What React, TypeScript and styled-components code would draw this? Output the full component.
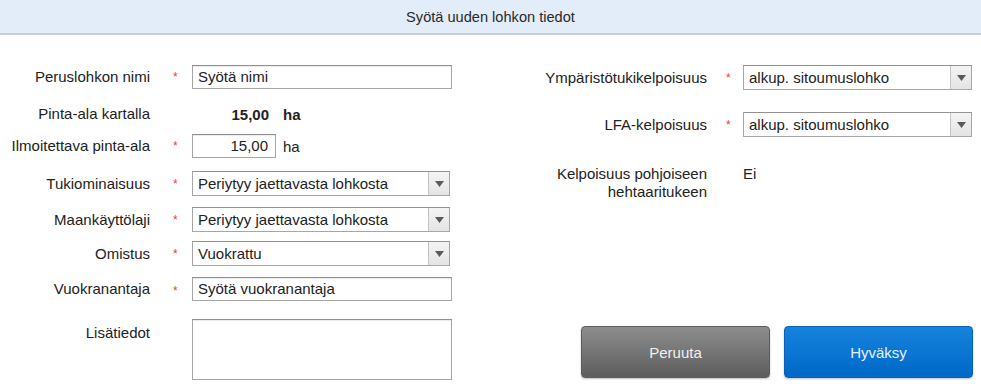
import React from 'react';
import styled, { createGlobalStyle } from 'styled-components';

const GlobalStyle = createGlobalStyle`
  html, body {
    margin: 0;
    padding: 0;
    background: #ffffff;
  }
  body {
    font-family: "Liberation Sans", Arial, Helvetica, sans-serif;
    font-size: 15px;
    color: #222222;
  }
`;

const Page = styled.div`
  width: 981px;
  height: 388px;
  overflow: hidden;
  background: #ffffff;
`;

const Header = styled.header`
  height: 33px;
  display: flex;
  align-items: center;
  justify-content: center;
  background: #e3edf9;
  border-bottom: 2px solid #c8cfd6;
  font-size: 14.6px;
  color: #2a2a2a;
`;

const Body = styled.div`
  display: grid;
  grid-template-columns: 490px 1fr;
  padding-top: 30px;
`;

const Column = styled.div`
  display: flex;
  flex-direction: column;
`;

const Row = styled.div<{ $cols: string; $mt?: number; $top?: boolean }>`
  display: grid;
  grid-template-columns: ${({ $cols }) => $cols};
  align-items: ${({ $top }) => ($top ? 'start' : 'center')};
  min-height: 24px;
  margin-top: ${({ $mt }) => $mt ?? 0}px;
`;

const Label = styled.div<{ $padTop?: number }>`
  justify-self: end;
  white-space: nowrap;
  text-align: right;
  line-height: 18px;
  padding-top: ${({ $padTop }) => $padTop ?? 0}px;
  color: #222222;
`;

const Star = styled.span<{ $pad: number; $down?: number }>`
  padding-left: ${({ $pad }) => $pad}px;
  color: #e2463c;
  font-size: 12px;
  line-height: 12px;
  position: relative;
  top: ${({ $down }) => $down ?? 0}px;
`;

const TextInput = styled.input<{ $width: number; $right?: boolean }>`
  box-sizing: border-box;
  width: ${({ $width }) => $width}px;
  height: 24px;
  margin: 0;
  padding: 0 7px 1px 5px;
  border: 1px solid #a6a6a6;
  border-top-color: #8f8f8f;
  border-radius: 0;
  box-shadow: inset 0 1px 1px rgba(0, 0, 0, 0.08);
  background: #ffffff;
  font-family: inherit;
  font-size: 15px;
  color: #222222;
  text-align: ${({ $right }) => ($right ? 'right' : 'left')};
  outline: none;
`;

const TextArea = styled.textarea`
  box-sizing: border-box;
  width: 260px;
  height: 61px;
  margin: 0;
  padding: 4px 6px;
  border: 1px solid #a6a6a6;
  border-top-color: #8f8f8f;
  box-shadow: inset 0 1px 1px rgba(0, 0, 0, 0.08);
  resize: none;
  font-family: inherit;
  font-size: 15px;
  outline: none;
`;

const SelectBox = styled.div<{ $width: number }>`
  box-sizing: border-box;
  width: ${({ $width }) => $width}px;
  height: 25px;
  display: flex;
  border: 1px solid #a6a6a6;
  border-top-color: #939393;
  background: #ffffff;
`;

const SelectValue = styled.div`
  flex: 1;
  display: flex;
  align-items: center;
  padding: 0 0 1px 5px;
  white-space: nowrap;
  overflow: hidden;
  color: #222222;
`;

const SelectArrow = styled.div`
  width: 20px;
  display: flex;
  align-items: center;
  justify-content: center;
  border-left: 1px solid #c4c4c4;
  background: linear-gradient(#f4f4f4, #e4e4e4);
`;

const Unit = styled.span<{ $bold?: boolean }>`
  margin-left: 7px;
  font-weight: ${({ $bold }) => ($bold ? 700 : 400)};
`;

const Inline = styled.div`
  display: flex;
  align-items: center;
`;

const StaticValue = styled.span`
  box-sizing: border-box;
  width: 84px;
  padding-right: 7px;
  text-align: right;
  font-weight: 700;
`;

const Value = styled.div`
  line-height: 18px;
`;

const Buttons = styled.div`
  display: flex;
  gap: 14px;
  margin-top: 125px;
  padding-left: 91px;
`;

const Button = styled.button<{ $primary?: boolean }>`
  width: 189px;
  height: 52px;
  border-radius: 4px;
  border: 1px solid ${({ $primary }) => ($primary ? '#0a62b8' : '#5c5c5c')};
  background: ${({ $primary }) =>
    $primary
      ? 'linear-gradient(#1683dd, #0068c8)'
      : 'linear-gradient(#8d8d8d, #5d5d5d)'};
  box-shadow: 0 1px 2px rgba(0, 0, 0, 0.25);
  color: ${({ $primary }) => ($primary ? '#e4f2ff' : '#f0f0f0')};
  font-family: inherit;
  font-size: 15px;
  cursor: pointer;
`;

const Triangle = () => (
  <svg width="9" height="6" viewBox="0 0 9 6">
    <path d="M0 0 H9 L4.5 6 Z" fill="#5a5a5a" />
  </svg>
);

const Select = ({ value, width }: { value: string; width: number }) => (
  <SelectBox $width={width}>
    <SelectValue>{value}</SelectValue>
    <SelectArrow>
      <Triangle />
    </SelectArrow>
  </SelectBox>
);

const LEFT = '150px 42px 1fr';
const RIGHT = '217px 36px 1fr';

const App: React.FC = () => {
  return (
    <Page>
      <GlobalStyle />
      <Header>Syötä uuden lohkon tiedot</Header>
      <Body>
        <Column>
          <Row $cols={LEFT}>
            <Label>Peruslohkon nimi</Label>
            <Star $pad={23}>*</Star>
            <TextInput $width={260} defaultValue="Syötä nimi" />
          </Row>
          <Row $cols={LEFT} $mt={13}>
            <Label>Pinta-ala kartalla</Label>
            <span />
            <Inline>
              <StaticValue>15,00</StaticValue>
              <Unit $bold>ha</Unit>
            </Inline>
          </Row>
          <Row $cols={LEFT} $mt={8}>
            <Label>Ilmoitettava pinta-ala</Label>
            <Star $pad={23}>*</Star>
            <Inline>
              <TextInput $width={84} $right defaultValue="15,00" />
              <Unit>ha</Unit>
            </Inline>
          </Row>
          <Row $cols={LEFT} $mt={13}>
            <Label>Tukiominaisuus</Label>
            <Star $pad={23}>*</Star>
            <Select width={258} value="Periytyy jaettavasta lohkosta" />
          </Row>
          <Row $cols={LEFT} $mt={11}>
            <Label>Maankäyttölaji</Label>
            <Star $pad={23}>*</Star>
            <Select width={258} value="Periytyy jaettavasta lohkosta" />
          </Row>
          <Row $cols={LEFT} $mt={9}>
            <Label>Omistus</Label>
            <Star $pad={23}>*</Star>
            <Select width={258} value="Vuokrattu" />
          </Row>
          <Row $cols={LEFT} $mt={11}>
            <Label>Vuokranantaja</Label>
            <Star $pad={23} $down={2}>*</Star>
            <TextInput $width={260} defaultValue="Syötä vuokranantaja" />
          </Row>
          <Row $cols={LEFT} $mt={18} $top>
            <Label $padTop={5}>Lisätiedot</Label>
            <span />
            <TextArea />
          </Row>
        </Column>
        <Column>
          <Row $cols={RIGHT}>
            <Label>Ympäristötukikelpoisuus</Label>
            <Star $pad={19}>*</Star>
            <Select width={229} value="alkup. sitoumuslohko" />
          </Row>
          <Row $cols={RIGHT} $mt={22}>
            <Label>LFA-kelpoisuus</Label>
            <Star $pad={19}>*</Star>
            <Select width={229} value="alkup. sitoumuslohko" />
          </Row>
          <Row $cols={RIGHT} $mt={28} $top>
            <Label>
              Kelpoisuus pohjoiseen
              <br />
              hehtaaritukeen
            </Label>
            <span />
            <Value>Ei</Value>
          </Row>
          <Buttons>
            <Button>Peruuta</Button>
            <Button $primary>Hyväksy</Button>
          </Buttons>
        </Column>
      </Body>
    </Page>
  );
};

export default App;
